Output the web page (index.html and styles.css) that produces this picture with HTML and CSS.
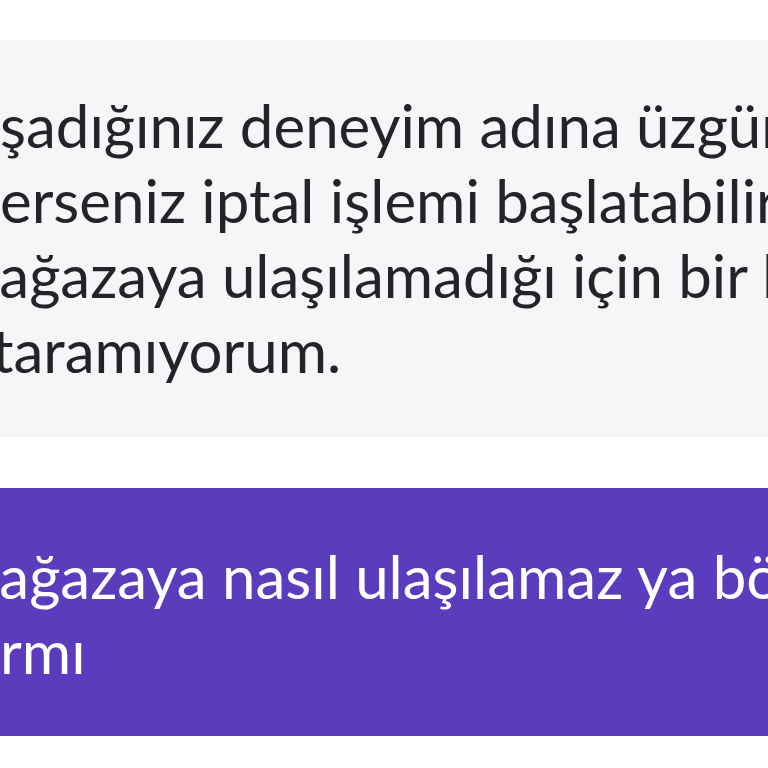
FILE: index.html
```html
<!DOCTYPE html>
<html lang="tr">
<head>
<meta charset="utf-8">
<link rel="stylesheet" href="styles.css">
</head>
<body>
<main class="chat">
  <div class="bubble bubble-bot">
    <div class="line">şadığınız deneyim adına üzgünüm</div>
    <div class="line">erseniz iptal işlemi başlatabilirim</div>
    <div class="line cut-m">mağazaya ulaşılamadığı için bir bilgi</div>
    <div class="line cut-t">taramıyorum.</div>
  </div>
  <div class="bubble bubble-user">
    <div class="line cut-m">mağazaya nasıl ulaşılamaz ya böyle</div>
    <div class="line">rmı</div>
  </div>
</main>
</body>
</html>
```

FILE: styles.css
```css
html, body {
  margin: 0;
  padding: 0;
  background: #ffffff;
  overflow: hidden;
}
.chat {
  width: 768px;
  height: 768px;
  padding-top: 40px;
  box-sizing: border-box;
  display: flex;
  flex-direction: column;
  gap: 50px;
  font-family: Lato, "Open Sans", sans-serif;
  font-size: 60px;
  line-height: 75px;
  overflow: hidden;
}
.bubble {
  width: 100%;
  overflow: hidden;
}
.bubble-bot {
  background: #f5f6f8;
  color: #222428;
  padding: 48px 0 50px;
}
.bubble-user {
  background: #5a3cbd;
  color: #ffffff;
  padding: 51px 0 47px;
}
.line {
  white-space: nowrap;
}
.cut-m {
  text-indent: -50px;
}
.cut-t {
  text-indent: -8px;
}
```
